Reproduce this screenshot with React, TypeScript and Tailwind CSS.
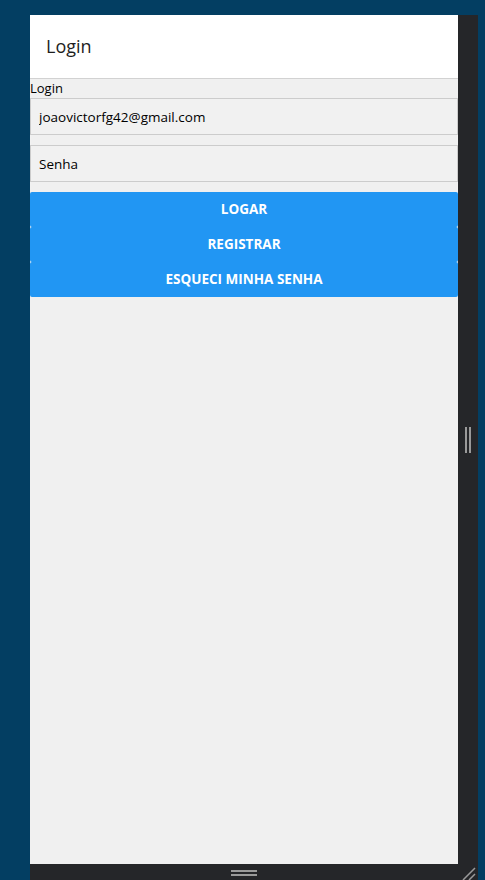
import React from "react";

const font = { fontFamily: '"Open Sans", "Noto Sans", sans-serif' };

const App = () => {
    return (
        <div className="flex h-[880px] w-[485px] bg-[#033e62] pl-[30px] pt-[15px]" style={font}>
            <div className="flex w-[448px] flex-col">
                <div className="flex flex-1">
                    <div className="flex w-[428px] flex-col bg-[#f0f0f0]">
                        <div className="flex h-[64px] items-center border-b border-[#d2d2d2] bg-white pl-4">
                            <h1 className="text-[18px] text-[#1e1e1e]">Login</h1>
                        </div>
                        <label className="text-[13px] leading-[19px] text-black">Login</label>
                        <input
                            className="h-[37px] border border-[#cccccc] bg-[#f1f1f1] px-[8px] text-[13.5px] text-black outline-none"
                            defaultValue="joaovictorfg42@gmail.com"
                        />
                        <input
                            className="mt-[10px] h-[37px] border border-[#cccccc] bg-[#f1f1f1] px-[8px] text-[13.5px] text-black outline-none placeholder:text-black"
                            placeholder="Senha"
                        />
                        <div className="mt-[10px] flex flex-col">
                            <button className="h-[35px] rounded-[2px] bg-[#2196f3] text-[13.5px] font-bold text-white">LOGAR</button>
                            <button className="h-[35px] rounded-[2px] bg-[#2196f3] text-[13.5px] font-bold text-white">REGISTRAR</button>
                            <button className="h-[35px] rounded-[2px] bg-[#2196f3] text-[13.5px] font-bold text-white">ESQUECI MINHA SENHA</button>
                        </div>
                    </div>
                    <div className="flex w-[20px] items-center justify-center gap-[2px] bg-[#252629]">
                        <div className="h-[26px] w-[2px] bg-[#9a9a9a]" />
                        <div className="h-[26px] w-[2px] bg-[#9a9a9a]" />
                    </div>
                </div>
                <div className="flex h-[16px] bg-[#252629]">
                    <div className="flex w-[428px] flex-col items-center justify-center gap-[2px] pt-[1px]">
                        <div className="h-[2px] w-[26px] bg-[#9a9a9a]" />
                        <div className="h-[2px] w-[26px] bg-[#9a9a9a]" />
                    </div>
                    <div className="flex w-[20px] items-end justify-center">
                        <svg width="16" height="14" viewBox="0 0 16 14">
                            <path d="M3 14 L15 2 M9 14 L15 8" stroke="#9a9a9a" strokeWidth="1.5" />
                        </svg>
                    </div>
                </div>
            </div>
        </div>
    );
};

export default App;
